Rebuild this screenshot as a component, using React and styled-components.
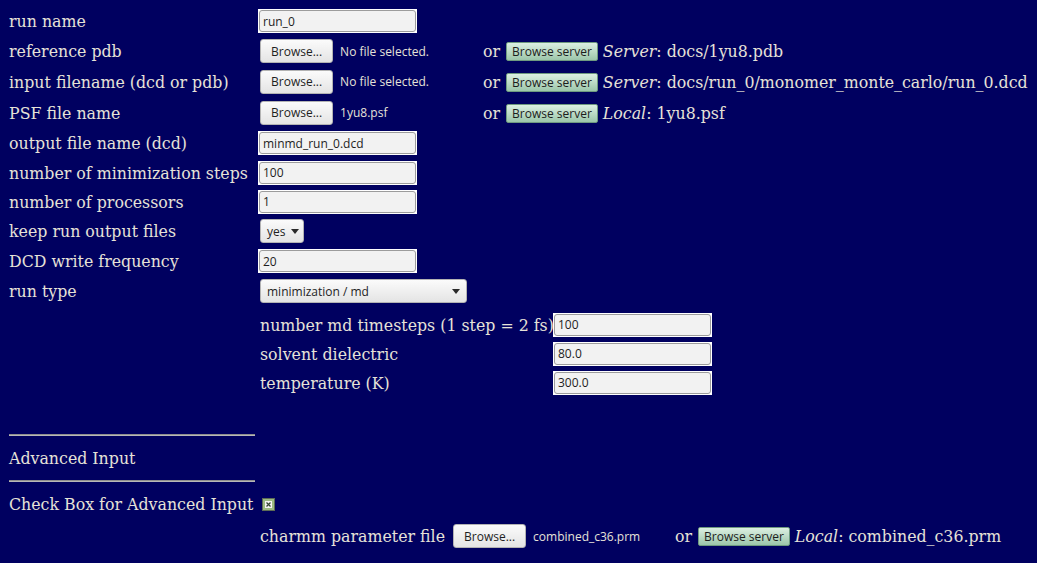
import React from 'react';
import styled, { createGlobalStyle } from 'styled-components';

const COLORS = {
  page: '#000060',
  text: '#e6e2d8',
  field: '#f2f2f2',
  fieldBorder: '#9c9c9c',
  widgetText: '#1e1e1e',
};

const GlobalStyle = createGlobalStyle`
  html, body {
    margin: 0;
    padding: 0;
    background-color: ${COLORS.page};
  }
  body {
    font-family: "DejaVu Serif", serif;
    font-size: 15.8px;
    color: ${COLORS.text};
  }
`;

const Page = styled.div`
  width: 1037px;
  height: 563px;
  padding: 6px 0 0 9px;
  box-sizing: border-box;
  overflow: hidden;
`;

const Row = styled.div`
  display: grid;
  grid-template-columns: 249px 225px auto;
  align-items: center;
  height: ${p => p.$h || 30}px;
  white-space: nowrap;
`;

const Label = styled.span`
  line-height: 1;
  padding-top: 2px;
`;

// md options sit in their own two-column table under the run type select
const Nested = styled.div`
  display: grid;
  grid-template-columns: 293px 159px;
  grid-auto-rows: 29px;
  align-items: center;
  margin: 4px 0 0 251px;
  white-space: nowrap;
`;

const FieldFrame = styled.span`
  display: inline-block;
  background: #fff;
  padding: 1px;
  width: ${p => p.$w || 159}px;
  height: 24px;
  box-sizing: border-box;
`;

const TextField = styled.input`
  display: block;
  width: 100%;
  height: 100%;
  box-sizing: border-box;
  margin: 0;
  padding: 0 3px;
  border: 1px solid ${COLORS.fieldBorder};
  border-radius: 3px;
  background: ${COLORS.field};
  font-family: "Open Sans", sans-serif;
  font-size: 12px;
  color: ${COLORS.widgetText};
  outline: none;
`;

const WidgetButton = styled.span`
  display: inline-flex;
  align-items: center;
  justify-content: center;
  box-sizing: border-box;
  height: 24px;
  margin-left: 2px;
  padding: 0 10px;
  border: 1px solid #b3b3b3;
  border-radius: 3px;
  background: linear-gradient(#fbfbfb, #e4e4e4);
  font-family: "Open Sans", sans-serif;
  font-size: 12px;
  color: ${COLORS.widgetText};
`;

const FileCell = styled.span`
  display: inline-flex;
  align-items: center;
  gap: 7px;
`;

const FileName = styled.span`
  font-family: "Open Sans", sans-serif;
  font-size: 12px;
  color: ${COLORS.text};
`;

const ServerCell = styled.span`
  display: inline-flex;
  align-items: center;
  padding-top: 1px;
`;

const Or = styled.span`
  margin-right: 6px;
`;

const ServerButton = styled.span`
  display: inline-flex;
  align-items: center;
  box-sizing: border-box;
  height: 19px;
  padding: 0 5px;
  border: 1px solid #6f9a80;
  border-radius: 2px;
  background: linear-gradient(#dcefe2, #9cc6aa);
  font-family: "Open Sans", sans-serif;
  font-size: 12px;
  color: #1c1c1c;
  margin-right: 5px;
`;

const Source = styled.em`
  font-style: italic;
`;

const Select = styled.span`
  display: inline-flex;
  align-items: center;
  justify-content: space-between;
  box-sizing: border-box;
  width: ${p => p.$w}px;
  height: 24px;
  margin-left: 2px;
  padding: 0 6px;
  border: 1px solid #b3b3b3;
  border-radius: 3px;
  background: linear-gradient(#fbfbfb, #e4e4e4);
  font-family: "Open Sans", sans-serif;
  font-size: 12px;
  color: ${COLORS.widgetText};
`;

const Arrow = styled.span`
  width: 0;
  height: 0;
  border-left: 4px solid transparent;
  border-right: 4px solid transparent;
  border-top: 5px solid #2a2a2a;
  margin-left: 6px;
`;

const Divider = styled.div`
  width: 246px;
  height: 0;
  margin-top: ${p => p.$top || 0}px;
  border-top: 1px solid #8e8e8e;
  border-bottom: 1px solid #b8b8b8;
`;

const SectionTitle = styled.div`
  height: 44px;
  display: flex;
  align-items: center;
`;

const CheckRow = styled.div`
  display: flex;
  align-items: center;
  height: 28px;
  margin-top: 8px;
  padding-top: 1px;
  box-sizing: border-box;
  white-space: nowrap;
`;

const CheckMark = styled.svg`
  margin-left: 9px;
`;

const ParamRow = styled.div`
  display: grid;
  grid-template-columns: 191px 224px auto;
  align-items: center;
  height: 30px;
  margin: 3px 0 0 251px;
  white-space: nowrap;
`;

const TextRow = ({ label, value, h }) => (
  <Row $h={h}>
    <Label>{label}</Label>
    <span>
      <FieldFrame>
        <TextField defaultValue={value} />
      </FieldFrame>
    </span>
  </Row>
);

const FileRow = ({ label, file, source, path, h }) => (
  <Row $h={h}>
    <Label>{label}</Label>
    <FileCell>
      <WidgetButton>Browse...</WidgetButton>
      <FileName>{file}</FileName>
    </FileCell>
    <ServerCell>
      <Or>or</Or>
      <ServerButton>Browse server</ServerButton>
      <span>
        <Source>{source}</Source>: {path}
      </span>
    </ServerCell>
  </Row>
);

const mdFields = [
  { label: 'number md timesteps (1 step = 2 fs)', value: '100' },
  { label: 'solvent dielectric', value: '80.0' },
  { label: 'temperature (K)', value: '300.0' },
];

const App = () => (
  <>
    <GlobalStyle />
    <Page>
      <TextRow label="run name" value="run_0" />
      <FileRow label="reference pdb" file="No file selected." source="Server" path="docs/1yu8.pdb" />
      <FileRow
        label="input filename (dcd or pdb)"
        file="No file selected."
        source="Server"
        path="docs/run_0/monomer_monte_carlo/run_0.dcd"
        h={31}
      />
      <FileRow label="PSF file name" file="1yu8.psf" source="Local" path="1yu8.psf" h={31} />
      <TextRow label="output file name (dcd)" value="minmd_run_0.dcd" />
      <TextRow label="number of minimization steps" value="100" h={29} />
      <TextRow label="number of processors" value="1" h={29} />
      <Row>
        <Label>keep run output files</Label>
        <span>
          <Select $w={44}>
            yes
            <Arrow />
          </Select>
        </span>
      </Row>
      <TextRow label="DCD write frequency" value="20" />
      <Row>
        <Label>run type</Label>
        <span>
          <Select $w={207}>
            minimization / md
            <Arrow />
          </Select>
        </span>
      </Row>

      <Nested>
        {mdFields.map(f => (
          <React.Fragment key={f.label}>
            <Label>{f.label}</Label>
            <FieldFrame>
              <TextField defaultValue={f.value} />
            </FieldFrame>
          </React.Fragment>
        ))}
      </Nested>

      <Divider $top={37} />
      <SectionTitle>Advanced Input</SectionTitle>
      <Divider />

      <CheckRow>
        Check Box for Advanced Input
        <CheckMark width="13" height="13" viewBox="0 0 13 13">
          <rect x="0.5" y="0.5" width="12" height="12" fill="#9dbb82" stroke="#5d6b55" />
          <rect x="3" y="3" width="7" height="7" fill="#f4f4f4" />
          <path d="M4.5 4.5 L8.5 8.5 M8.5 4.5 L4.5 8.5" stroke="#3a4a36" strokeWidth="1.3" />
        </CheckMark>
      </CheckRow>

      <ParamRow>
        <Label>charmm parameter file</Label>
        <FileCell>
          <WidgetButton>Browse...</WidgetButton>
          <FileName>combined_c36.prm</FileName>
        </FileCell>
        <ServerCell>
          <Or>or</Or>
          <ServerButton>Browse server</ServerButton>
          <span>
            <Source>Local</Source>: combined_c36.prm
          </span>
        </ServerCell>
      </ParamRow>
    </Page>
  </>
);

export default App;
